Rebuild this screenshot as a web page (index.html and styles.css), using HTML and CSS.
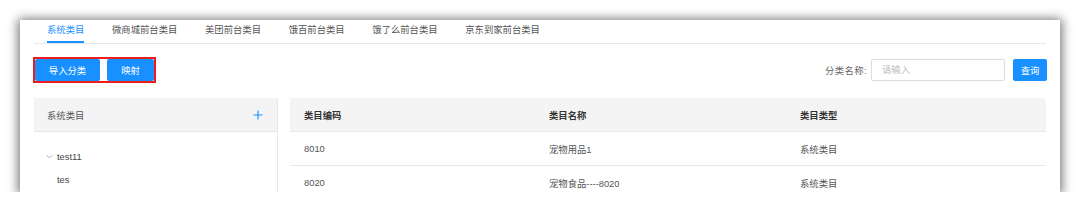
FILE: index.html
```html
<!DOCTYPE html>
<html lang="zh-CN">
<head>
<meta charset="utf-8">
<link rel="stylesheet" href="styles.css">
</head>
<body>
<div class="card">
  <div class="tabs">
    <div class="tab active">系统类目</div>
    <div class="tab">微商城前台类目</div>
    <div class="tab">美团前台类目</div>
    <div class="tab">饿百前台类目</div>
    <div class="tab">饿了么前台类目</div>
    <div class="tab">京东到家前台类目</div>
  </div>
  <div class="toolbar">
    <div class="mark">
      <button class="btn btn-wide">导入分类</button>
      <button class="btn btn-narrow">映射</button>
    </div>
    <div class="search">
      <span class="label">分类名称:</span>
      <div class="input">请输入</div>
      <button class="btn btn-query">查询</button>
    </div>
  </div>
  <div class="panels">
    <div class="tree-panel">
      <div class="tree-head">
        <span>系统类目</span>
        <svg class="plus" width="10" height="10" viewBox="0 0 10 10"><path d="M5 0.5V9.5M0.5 5H9.5" stroke="#1890ff" stroke-width="1.1" fill="none"/></svg>
      </div>
      <div class="tree-body">
        <div class="node">
          <svg class="caret" width="7" height="5" viewBox="0 0 7 5"><path d="M0.5 1L3.5 4L6.5 1" stroke="#aaa" stroke-width="0.9" fill="none"/></svg>
          <span>test11</span>
        </div>
        <div class="node child"><span>tes</span></div>
      </div>
    </div>
    <div class="table">
      <div class="row head">
        <div class="cell">类目编码</div>
        <div class="cell">类目名称</div>
        <div class="cell">类目类型</div>
      </div>
      <div class="row">
        <div class="cell">8010</div>
        <div class="cell">宠物用品1</div>
        <div class="cell">系统类目</div>
      </div>
      <div class="row">
        <div class="cell">8020</div>
        <div class="cell">宠物食品----8020</div>
        <div class="cell">系统类目</div>
      </div>
    </div>
  </div>
</div>
</body>
</html>
```

FILE: styles.css
```css
html, body {
  margin: 0;
  padding: 0;
  background: #fff;
  overflow: hidden;
}
body {
  padding: 20px 20px 0 20px;
  font-family: "Liberation Sans", "Noto Sans CJK SC", sans-serif;
  font-size: 9.33px;
  color: #555;
}
.card {
  width: 1012px;
  height: 172px;
  padding: 0 14px;
  background: #fff;
  box-shadow: 0 1px 10px 2px rgba(0, 0, 0, 0.55);
  overflow: hidden;
}
.tabs {
  display: flex;
  height: 23px;
  border-bottom: 1px solid #e8e8e8;
  padding-left: 13px;
}
.tab {
  box-sizing: border-box;
  height: 23px;
  line-height: 21px;
  margin-right: 27.7px;
  color: #555;
  border-bottom: 2px solid transparent;
}
.tab.active {
  color: #1890ff;
  border-bottom-color: #1890ff;
}
.toolbar {
  display: flex;
  justify-content: space-between;
  align-items: center;
  margin-top: 13px;
  height: 26px;
  margin-bottom: 15px;
}
.mark {
  display: flex;
  gap: 7px;
  border: 2px solid #ee1c1c;
  margin-left: -1px;
}
.btn {
  border: none;
  background: #1890ff;
  color: #fff;
  font-family: inherit;
  font-size: 9.33px;
  height: 22px;
  padding: 0;
  border-radius: 2px;
  cursor: pointer;
}
.btn-wide { width: 65px; }
.btn-narrow { width: 47px; }
.btn-query { width: 34px; }
.search {
  display: flex;
  align-items: center;
  margin-right: -1px;
}
.label {
  color: #666;
  margin-right: 4px;
  letter-spacing: 0.4px;
}
.input {
  box-sizing: border-box;
  width: 134px;
  height: 22px;
  border: 1px solid #dcdcdc;
  border-radius: 2px;
  line-height: 20px;
  padding-left: 10px;
  color: #c0c0c0;
  margin-right: 8px;
}
.panels {
  display: flex;
  gap: 12px;
}
.tree-panel {
  width: 243px;
  border-right: 1px solid #e8e8e8;
  height: 100px;
}
.tree-head {
  display: flex;
  justify-content: space-between;
  align-items: center;
  height: 33px;
  padding: 0 14px 0 13px;
  background: #f4f4f4;
  border-bottom: 1px solid #e6e6e6;
  color: #555;
}
.tree-body {
  padding-top: 13px;
}
.node {
  display: flex;
  align-items: center;
  height: 23px;
  padding-left: 12px;
  color: #444;
}
.caret {
  margin-right: 4px;
}
.node.child {
  padding-left: 23px;
}
.table {
  flex: 1;
}
.row {
  display: grid;
  grid-template-columns: 245px 251px 1fr;
  height: 33px;
  align-items: center;
  border-bottom: 1px solid #e8e8e8;
}
.row.head {
  background: #f4f4f4;
  border-top-right-radius: 4px;
  border-top-left-radius: 2px;
  font-weight: bold;
  color: #333;
}
.cell {
  padding-left: 14px;
}
```
